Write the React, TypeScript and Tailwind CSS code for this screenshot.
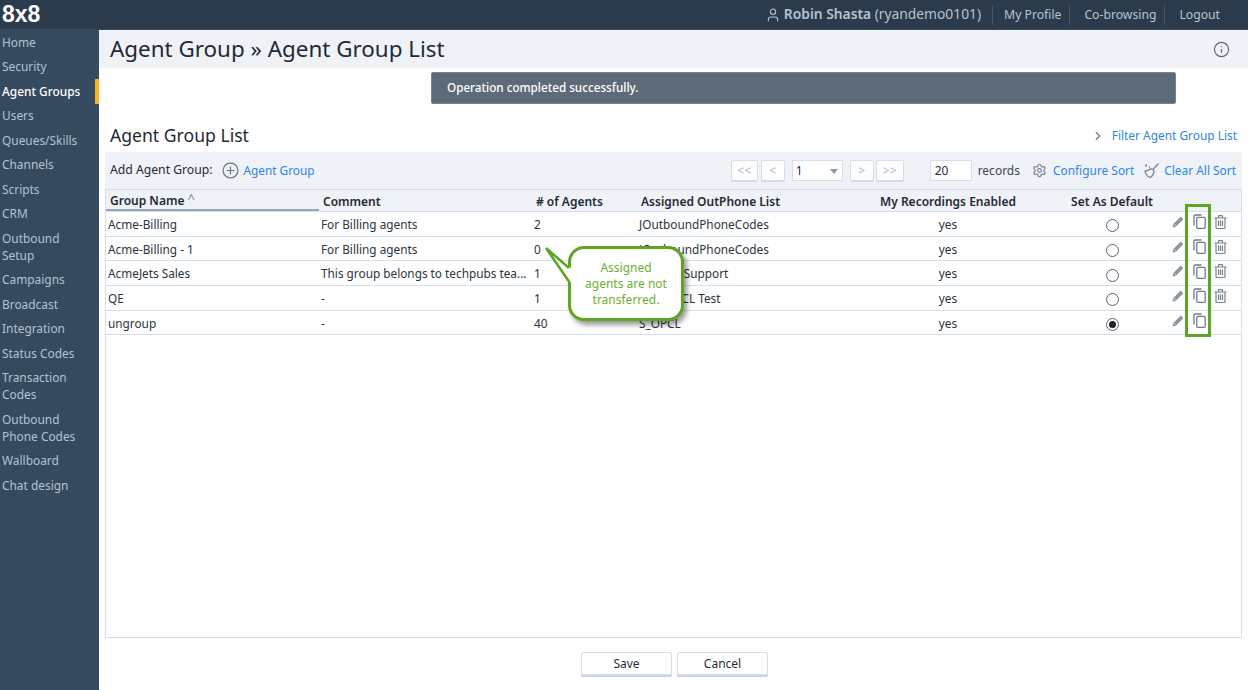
import { ChevronRight, Info, Settings, User } from "lucide-react";

const navItems = [
  "Home",
  "Security",
  "Agent Groups",
  "Users",
  "Queues/Skills",
  "Channels",
  "Scripts",
  "CRM",
  "Outbound Setup",
  "Campaigns",
  "Broadcast",
  "Integration",
  "Status Codes",
  "Transaction Codes",
  "Outbound Phone Codes",
  "Wallboard",
  "Chat design",
];

const rows = [
  { name: "Acme-Billing", comment: "For Billing agents", agents: "2", list: "JOutboundPhoneCodes", trash: true, on: false },
  { name: "Acme-Billing - 1", comment: "For Billing agents", agents: "0", list: "JOutboundPhoneCodes", trash: true, on: false },
  { name: "AcmeJets Sales", comment: "This group belongs to techpubs tea...", agents: "1", list: "S_OPCL Support", trash: true, on: false },
  { name: "QE", comment: "-", agents: "1", list: "Acme_TCL Test", trash: true, on: false },
  { name: "ungroup", comment: "-", agents: "40", list: "S_OPCL", trash: false, on: true },
];

function PagerButton({ label, className }: { label: string; className: string }) {
  return (
    <div
      className={`${className} h-[21px] flex items-center justify-center bg-white border border-[#d5dfec] rounded-[2px] text-[12px] text-[#a9b4c2] shadow-[0_1px_0_#cfd9e6]`}
    >
      {label}
    </div>
  );
}

function BroomIcon() {
  return (
    <svg width="17" height="17" viewBox="0 0 17 17" fill="none" stroke="#7b8793" strokeWidth="1.3">
      <path d="M15.500 1.500 10 7.500" />
      <path d="M10 7.500c-2-1-3.500-.5-5 1l-3 .5c.5 3 2.500 5.500 5 6.500 2-1 3.500-3 4-5.500.2-1-.2-1.800-1-2.500z" />
      <path d="M2 3.500h2M3 2.500v2M6 5h1" />
    </svg>
  );
}

function PencilIcon() {
  return (
    <svg width="12" height="12" viewBox="0 0 12 12" fill="#8a96a1">
      <path d="M8.800.6 11.400 3.200 3.900 10.700.6 11.400 1.300 8.100z" />
      <path d="M2.300 8.300 3.700 9.700" stroke="#fff" strokeWidth="0.7" />
    </svg>
  );
}

function CopyIcon() {
  return (
    <svg width="13" height="15" viewBox="0 0 13 15" fill="none" stroke="#6f7c88" strokeWidth="1.300">
      <path d="M1 11.500V2a1 1 0 0 1 1-1h6.500" />
      <rect x="3.800" y="3.300" width="8.400" height="11" rx="1" />
    </svg>
  );
}

function TrashIcon() {
  return (
    <svg width="13" height="14" viewBox="0 0 13 14" fill="none" stroke="#76838f" strokeWidth="1.200">
      <path d="M.5 3h12M4.500 3V1.300a.6.6 0 0 1 .6-.6h2.800a.6.6 0 0 1 .6.6V3" />
      <path d="M2 3v9.500a1 1 0 0 0 1 1h7a1 1 0 0 0 1-1V3" />
      <path d="M4.500 5.500v5.500M6.500 5.500v5.500M8.500 5.500v5.500" />
    </svg>
  );
}

function ActionIcons({ trash }: { trash: boolean }) {
  return (
    <div className="flex items-center -translate-y-[3px]">
      <span className="ml-[-3px]"><PencilIcon /></span>
      <span className="ml-[9px]"><CopyIcon /></span>
      {trash && <span className="ml-[8px]"><TrashIcon /></span>}
    </div>
  );
}

function Button({ label }: { label: string }) {
  return (
    <button className="w-[91px] h-[23px] bg-white border border-[#d5dfec] rounded-[2px] text-[12px] text-[#1f2a36] shadow-[0_2px_0_#cbd6e4]">
      {label}
    </button>
  );
}

export default function App() {
  return (
    <div className="w-[1248px] h-[690px] overflow-hidden flex flex-col bg-white font-['Noto_Sans',sans-serif] text-[#1f2a36]">
      {/* Top bar */}
      <header className="h-[30px] shrink-0 bg-[#2c3b4c] flex items-center justify-between border-b border-[#3c4c5e]">
        <span className="pl-[2px] text-[23px] leading-none font-bold text-white font-['Liberation_Sans',sans-serif]">8x8</span>
        <div className="flex items-center text-[#b6c2cf] text-[12.200px] pr-[28px]">
          <User size={16} strokeWidth={1.6} />
          <span className="ml-[3px] text-[13.800px]">
            <span className="font-semibold">Robin Shasta</span> (ryandemo0101)
          </span>
          <span className="ml-[11px] pl-[11px] border-l border-[#46566a] leading-[20px]">My Profile</span>
          <span className="ml-[8px] pl-[14px] border-l border-[#46566a] leading-[20px]">Co-browsing</span>
          <span className="ml-[8px] pl-[14px] border-l border-[#46566a] leading-[20px]">Logout</span>
        </div>
      </header>

      <div className="flex flex-1 min-h-0">
        {/* Sidebar */}
        <nav className="w-[99px] shrink-0 bg-[#35495f]">
          {navItems.map((item) => (
            <div
              key={item}
              className={`pl-[2px] py-[3.750px] text-[11.900px] leading-[17px] ${
                item === "Agent Groups"
                  ? "pr-[4px] text-white font-medium border-r-4 border-[#fbb225]"
                  : "pr-[14px] text-[#b6c2cf]"
              }`}
            >
              {item}
            </div>
          ))}
        </nav>

        {/* Main */}
        <main className="flex-1 min-w-0 flex flex-col">
          <div className="h-[38px] shrink-0 bg-[#eff2f7] flex items-center justify-between pl-[11px] pr-[18px]">
            <h1 className="text-[22.400px] leading-none">Agent Group » Agent Group List</h1>
            <Info size={17} strokeWidth={1.7} className="text-[#5f6b76]" />
          </div>

          <div className="mt-[4px] ml-[332px] w-[745px] h-[32px] shrink-0 bg-[#5d6b78] border border-[#77838e] rounded-[2px] flex items-center pl-[15px] text-[11.700px] font-medium text-white">
            Operation completed successfully.
          </div>

          <div className="mt-[19px] flex items-center justify-between pl-[11px] pr-[11px] h-[26px] shrink-0">
            <h2 className="text-[17.600px] leading-none">Agent Group List</h2>
            <div className="flex items-center text-[11.900px] text-[#2e86de]">
              <ChevronRight size={14} strokeWidth={2} className="text-[#6c7883] mr-[7px]" />
              Filter Agent Group List
            </div>
          </div>

          <div className="flex-1 min-h-0 mx-[6px] mt-[3px] flex flex-col">
            {/* Toolbar */}
            <div className="h-[37px] shrink-0 bg-[#eff2f7] flex items-center pl-[5px] pr-[6px] text-[12.200px]">
              <span>Add Agent Group:</span>
              <svg width="17" height="17" viewBox="0 0 17 17" fill="none" stroke="#6c7883" strokeWidth="1.2" className="ml-[9px]">
                <circle cx="8.500" cy="8.500" r="7.400" />
                <path d="M8.500 4.500v8M4.500 8.500h8" />
              </svg>
              <span className="ml-[5px] text-[11.800px] text-[#2e86de]">Agent Group</span>
              <div className="ml-auto flex items-center">
                <PagerButton label="<<" className="w-[27px]" />
                <PagerButton label="<" className="w-[24px] ml-[3px]" />
                <div className="relative ml-[7px] w-[51px] h-[21px] bg-white border border-[#d5dfec] flex items-center pl-[3px] text-[12px]">
                  1
                  <span className="absolute right-[4px] top-[8px] w-0 h-0 border-x-[4px] border-x-transparent border-t-[5px] border-t-[#8b97a3]" />
                </div>
                <PagerButton label=">" className="w-[24px] ml-[7px]" />
                <PagerButton label=">>" className="w-[28px] ml-[2px]" />
              </div>
              <div className="ml-[26px] w-[42px] h-[21px] bg-white border border-[#d5dfec] flex items-center pl-[4px] text-[12px]">20</div>
              <span className="ml-[6px] text-[12px] text-[#3b4753]">records</span>
              <Settings size={15} strokeWidth={1.9} className="ml-[12px] text-[#76838f]" />
              <span className="ml-[6px] text-[11.900px] text-[#2e86de]">Configure Sort</span>
              <span className="ml-[9px]"><BroomIcon /></span>
              <span className="ml-[4px] text-[11.900px] text-[#2e86de]">Clear All Sort</span>
            </div>

            {/* Table */}
            <div className="relative flex-1 min-h-0 border border-[#d5dfec]">
              <div className="h-[22px] bg-[#eff2f7] border-b border-[#d5dfec] grid grid-cols-[214px_213px_106px_208px_202px_126px_1fr] items-center text-[12px] font-semibold leading-none">
                <div className="h-full pl-[4px] mr-[1px] pt-[2px] flex items-center border-b-2 border-[#9aa6b3]">
                  Group Name <span className="ml-[3px] -mt-[5px] text-[#7c8894] text-[13px] font-normal">^</span>
                </div>
                <div className="pl-[3px] pt-[2px]">Comment</div>
                <div className="pl-[3px] pt-[2px]">{"# of Agents"}</div>
                <div className="pl-[2px] pt-[2px]">Assigned OutPhone List</div>
                <div className="text-center pt-[2px]">My Recordings Enabled</div>
                <div className="text-center pt-[2px]">Set As Default</div>
                <div />
              </div>

              {rows.map((r) => (
                <div
                  key={r.name}
                  className="h-[24.700px] pt-[2px] border-b border-[#d5dfec] grid grid-cols-[214px_213px_106px_208px_202px_126px_1fr] items-center text-[11.800px] text-[#2a3540]"
                >
                  <div className="pl-[2px]">{r.name}</div>
                  <div className="pl-[1px] truncate">{r.comment}</div>
                  <div className="pl-[1px]">{r.agents}</div>
                  <div>{r.list}</div>
                  <div className="text-center">yes</div>
                  <div className="flex justify-center translate-y-[1px]">
                    <span className="w-[13px] h-[13px] rounded-full border border-[#5a6570] flex items-center justify-center bg-white">
                      {r.on && <span className="w-[7px] h-[7px] rounded-full bg-[#222]" />}
                    </span>
                  </div>
                  <ActionIcons trash={r.trash} />
                </div>
              ))}

              {/* Highlight round the copy icons */}
              <div className="absolute left-[1079px] top-[14px] w-[26px] h-[133px] border-[3px] border-[#5fa423]" />

              {/* Callout */}
              <div className="absolute left-[462px] top-[56px] w-[116px] h-[75px] bg-white border-[3px] border-[#5fa423] rounded-[16px] shadow-[3px_4px_5px_rgba(0,0,0,0.4)] flex items-center justify-center text-center text-[12px] leading-[16px] text-[#6fae35]">
                <span>
                  Assigned
                  <br />
                  agents are not
                  <br />
                  transferred.
                </span>
              </div>
              <svg width="32" height="40" viewBox="0 0 32 40" className="absolute left-[439px] top-[57px]">
                <path d="M1 1 L23 20 L27 21 L27 35 L25 36 Z" fill="#fff" />
                <path d="M1 1 L24 21 M1 1 L25 36" fill="none" stroke="#5fa423" strokeWidth="2.500" />
              </svg>
            </div>
          </div>

          <div className="h-[52px] shrink-0 pt-[14px] pl-[482px] flex gap-[5px] items-start">
            <Button label="Save" />
            <Button label="Cancel" />
          </div>
        </main>
      </div>
    </div>
  );
}
